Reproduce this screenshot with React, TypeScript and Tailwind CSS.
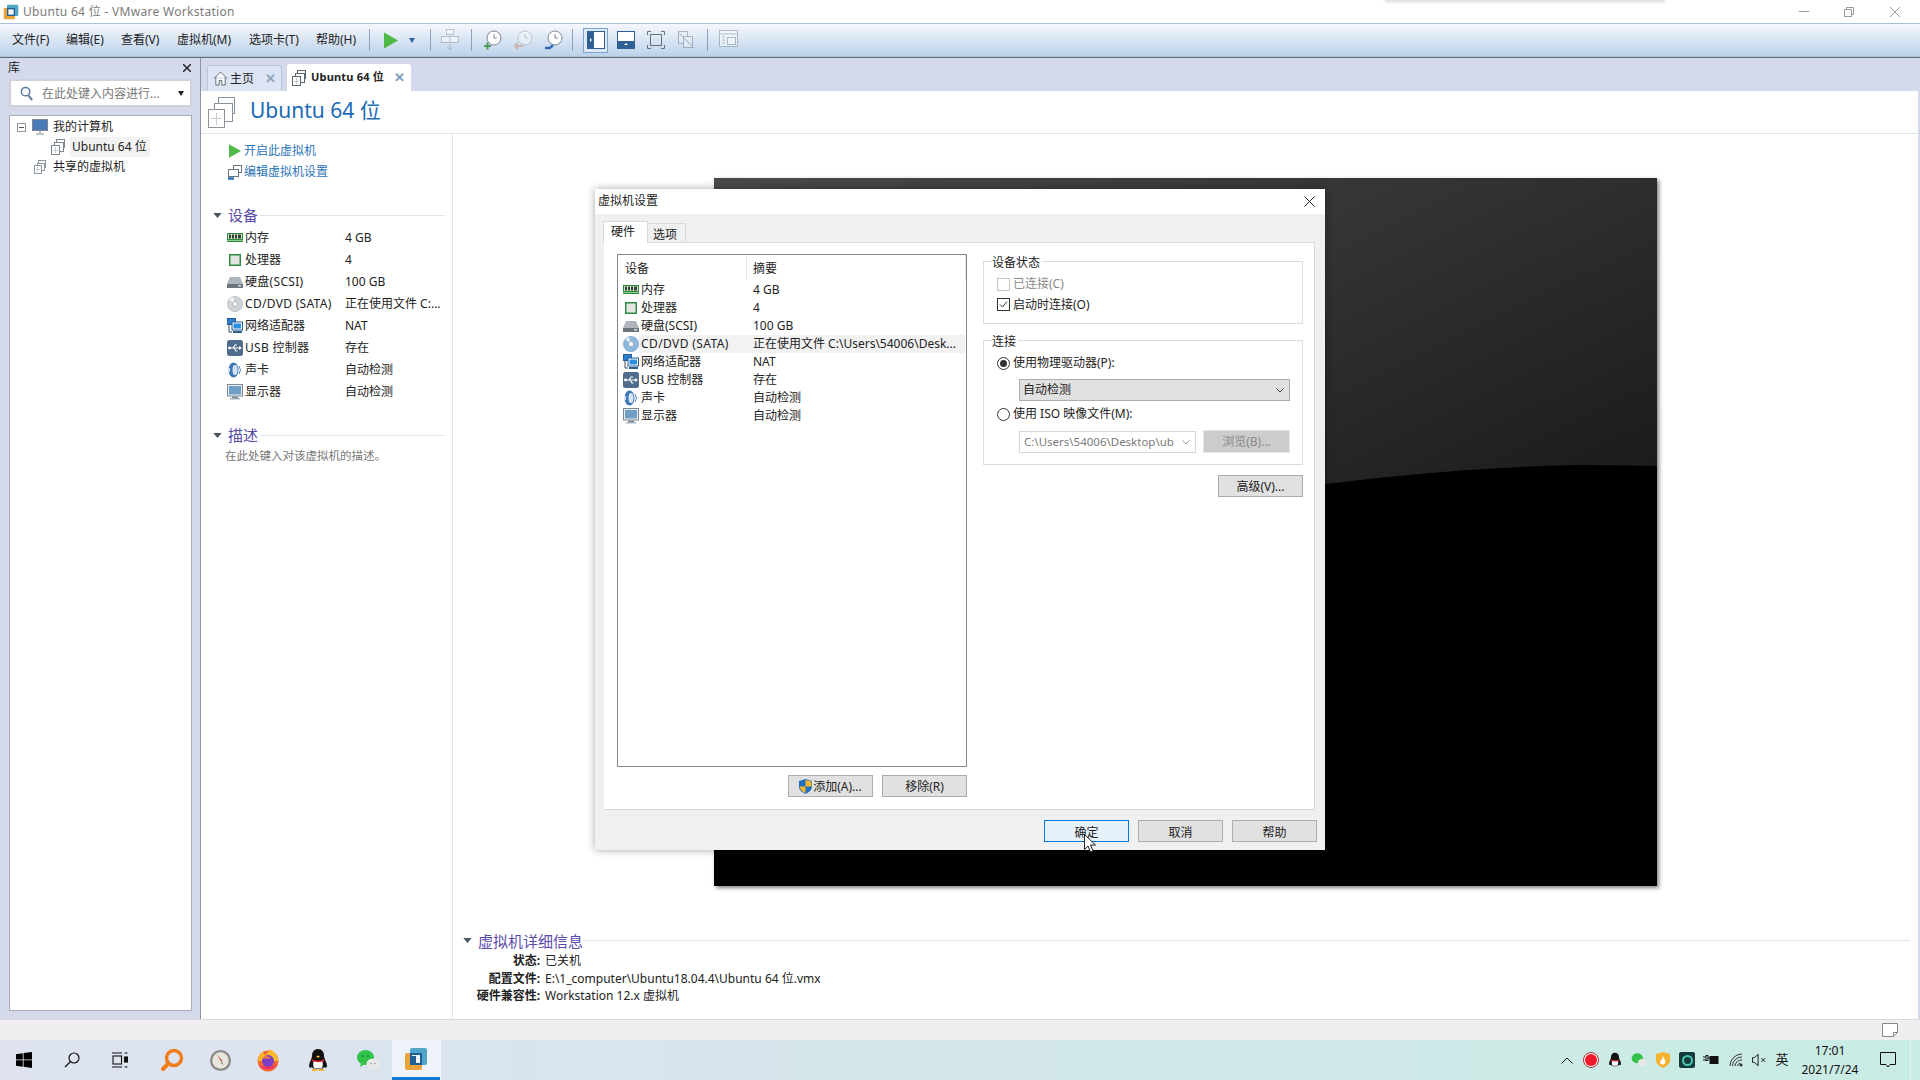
import React from 'react';

type IconProps = { className?: string };

const VmIcon = ({ className = 'w-4 h-4', color = '#7d8793', sw = 1 }: IconProps & { color?: string; sw?: number }) => (
  <svg viewBox="0 0 16 16" className={className} fill="#fff" stroke={color} strokeWidth={sw} shapeRendering="crispEdges">
    <rect x="5.5" y="0.5" width="8" height="8" />
    <rect x="3.5" y="3.5" width="9" height="9" />
    <rect x="0.5" y="6.5" width="8" height="9" />
    <path d="M4.5 8v6M2 11h5" stroke="#c5cbd3" />
  </svg>
);

const RamIcon = () => (
  <svg viewBox="0 0 16 16" className="w-4 h-4">
    <rect x="0" y="3" width="16" height="9" fill="#2e8b3e" />
    <rect x="1" y="4" width="14" height="5" fill="#cfe8c8" />
    <path d="M2 4.5h2v4H2zM5 4.5h2v4H5zM8 4.5h2v4H8zM11 4.5h3v4h-3z" fill="#3b3f3a" />
    <rect x="0" y="10" width="16" height="1" fill="#8ccb8e" />
  </svg>
);

const CpuIcon = () => (
  <svg viewBox="0 0 16 16" className="w-4 h-4">
    <rect x="2" y="2" width="12" height="12" fill="#2e8b45" />
    <rect x="3.500" y="3.500" width="9" height="9" fill="#e3e6e0" />
  </svg>
);

const HddIcon = () => (
  <svg viewBox="0 0 16 16" className="w-4 h-4">
    <path d="M3 3h10l3 7H0z" fill="#aeb5bd" />
    <path d="M0 10h16v4H0z" fill="#6c7480" />
    <rect x="11" y="11" width="3" height="1.5" fill="#d8dde2" />
  </svg>
);

const CdIcon = ({ tint = false }: { tint?: boolean }) => (
  <svg viewBox="0 0 16 16" className="w-4 h-4">
    <circle cx="8" cy="8" r="7.7" fill={tint ? '#8db8dd' : '#cfd2d6'} stroke={tint ? '#6f9dc6' : '#a8acb2'} strokeWidth="0.5" />
    <path d="M8 8 L2 3 A8 8 0 0 1 6 1z" fill="#fff" opacity="0.7" />
    <circle cx="8" cy="8" r="2.6" fill="#eef1f4" stroke="#9aa1a9" strokeWidth="0.6" />
    <circle cx="8" cy="8" r="1" fill="#fff" />
  </svg>
);

const NetIcon = () => (
  <svg viewBox="0 0 16 16" className="w-4 h-4">
    <rect x="0.5" y="0.5" width="8" height="6" fill="#2a7fd0" stroke="#245a92" />
    <path d="M2 7v7h3" fill="none" stroke="#3a4b5c" />
    <rect x="5" y="4" width="10.5" height="8" fill="#fff" stroke="#245a92" />
    <rect x="6.5" y="5.5" width="7.5" height="5" fill="#2a8fe0" />
    <rect x="6" y="13" width="9" height="2" fill="#2e5f8f" />
  </svg>
);

const UsbIcon = () => (
  <svg viewBox="0 0 16 16" className="w-4 h-4">
    <rect x="0" y="0" width="16" height="16" rx="2.5" fill="#4f6c8c" />
    <path d="M2 8h11M6 8l2-3h2M7 8l2 3h1.500" fill="none" stroke="#fff" strokeWidth="1.100" />
    <circle cx="2.500" cy="8" r="1.400" fill="#fff" />
    <path d="M12 6l3 2-3 2z" fill="#fff" />
  </svg>
);

const SoundIcon = () => (
  <svg viewBox="0 0 16 16" className="w-4 h-4">
    <ellipse cx="6.500" cy="8" rx="5" ry="7.500" fill="#3f78b8" />
    <ellipse cx="8" cy="8" rx="2.500" ry="5" fill="#d5e4f3" />
    <path d="M12 4q3 4 0 8" fill="none" stroke="#5a87b5" />
    <path d="M1 6h2v4H1z" fill="#cfe0f2" />
  </svg>
);

const MonitorIcon = () => (
  <svg viewBox="0 0 16 16" className="w-4 h-4">
    <rect x="0.500" y="0.500" width="15" height="11.500" fill="#eef1f4" stroke="#7b8794" />
    <rect x="2" y="2" width="12" height="8.500" fill="#6f9fc6" />
    <rect x="5" y="12.500" width="6" height="1.500" fill="#7b8794" />
    <rect x="3" y="14" width="10" height="1.500" fill="#a9b2bb" />
  </svg>
);

const Triangle = () => (
  <svg viewBox="0 0 10 6" className="w-[9px] h-[5px]">
    <path d="M0 0h10L5 6z" fill="#4a5560" />
  </svg>
);

const PlayIcon = ({ className }: IconProps) => (
  <svg viewBox="0 0 14 16" className={className}>
    <path d="M0 0l14 8-14 8z" fill="#4fb948" />
  </svg>
);

const ClockIcon = ({ badge, faded }: { badge?: string; faded?: boolean }) => (
  <svg viewBox="0 0 20 20" className="w-5 h-5" opacity={faded ? 0.35 : 1}>
    <circle cx="11" cy="8" r="7" fill="#fff" stroke="#7b8794" />
    <path d="M11 4v4h3" fill="none" stroke="#7b8794" />
    {badge === 'plus' && <path d="M1 16h7M4.500 12.500v7" stroke="#4f9a56" strokeWidth="2" />}
    {badge === 'back' && <path d="M0 16h9M4 13l-3 3 3 3" stroke="#c96b3a" strokeWidth="2" fill="none" />}
    {badge === 'wrench' && <path d="M1 18h5l3-3" stroke="#2f6fb0" strokeWidth="2.500" fill="none" />}
  </svg>
);

const toolbarIcon = 'w-[25px] h-[25px] flex items-center justify-center';

const Toolbar = () => (
  <div className="h-[34px] mx-0 border-y border-[#a9c1d6] bg-gradient-to-b from-[#f5f7fe] to-[#bdd3ea] flex items-center pl-[12px] text-[12px] text-[#222] shrink-0">
    {[
      ['文件(F)', 'w-[54px]'],
      ['编辑(E)', 'w-[55px]'],
      ['查看(V)', 'w-[56px]'],
      ['虚拟机(M)', 'w-[72px]'],
      ['选项卡(T)', 'w-[67px]'],
      ['帮助(H)', 'w-[53px]'],
    ].map(([label, width]) => (
      <span key={label} className={`${width} whitespace-nowrap`}>{label}</span>
    ))}
    <span className="w-px h-[22px] bg-[#8fa3b8] mr-[14px]" />
    <PlayIcon className="w-[14px] h-[17px] mr-[11px]" />
    <span className="w-0 h-0 border-x-[3px] border-x-transparent border-t-[5px] border-t-[#2b5fa5] mr-[15px]" />
    <span className="w-px h-[22px] bg-[#8fa3b8] mr-[9px]" />
    <div className="w-[20px] h-[22px] mr-[11px] opacity-50 flex items-center justify-center">
      <svg viewBox="0 0 18 22" className="w-[18px] h-[22px]" fill="#fff" stroke="#8b95a3">
        <rect x="5.500" y="0.500" width="7" height="5" />
        <rect x="0.500" y="7.500" width="17" height="6" />
        <path d="M9 15v6M6.500 18.500L9 21l2.500-2.500M9 7.500v6" fill="none" />
      </svg>
    </div>
    <span className="w-px h-[22px] bg-[#8fa3b8] mr-[8px]" />
    <div className={`${toolbarIcon} mr-[6px]`}><ClockIcon badge="plus" /></div>
    <div className={`${toolbarIcon} mr-[5px]`}><ClockIcon badge="back" faded /></div>
    <div className={`${toolbarIcon} mr-[6px]`}><ClockIcon badge="wrench" /></div>
    <span className="w-px h-[22px] bg-[#8fa3b8] mr-[10px]" />
    <div className={`${toolbarIcon} border border-[#7ea4cf] bg-[#dbe8f6] mr-[5px]`}>
      <svg viewBox="0 0 18 18" className="w-[18px] h-[18px]">
        <rect x="0.500" y="0.500" width="17" height="17" fill="#fff" stroke="#2f5f94" />
        <rect x="1" y="1" width="6" height="16" fill="#2f5f94" />
        <path d="M3 7l2 2-2 2z" fill="#fff" />
      </svg>
    </div>
    <div className={`${toolbarIcon} mr-[5px]`}>
      <svg viewBox="0 0 18 18" className="w-[18px] h-[18px]">
        <rect x="0.500" y="0.500" width="17" height="17" fill="#fff" stroke="#2f5f94" />
        <rect x="1" y="10" width="16" height="7" fill="#2f5f94" />
        <path d="M7 14l2-2 2 2z" fill="#fff" />
      </svg>
    </div>
    <div className={`${toolbarIcon} mr-[5px]`}>
      <svg viewBox="0 0 18 18" className="w-[18px] h-[18px]" fill="none" stroke="#68727e">
        <rect x="3.500" y="3.500" width="11" height="11" />
        <path d="M0.500 4V0.500H4M14 0.500h3.500V4M0.500 14v3.500H4M14 17.500h3.500V14" />
      </svg>
    </div>
    <div className={`${toolbarIcon} mr-[9px] opacity-45`}>
      <svg viewBox="0 0 18 18" className="w-[18px] h-[18px]" fill="#eef0f3" stroke="#68727e">
        <rect x="1.500" y="0.500" width="9" height="12" />
        <rect x="6.500" y="5.500" width="9" height="11" />
        <path d="M1 1l16 16" />
      </svg>
    </div>
    <span className="w-px h-[22px] bg-[#8fa3b8] mr-[11px]" />
    <div className="w-[22px] h-[20px] opacity-50">
      <svg viewBox="0 0 20 18" className="w-[20px] h-[18px]" fill="#fff" stroke="#7b8794">
        <rect x="0.500" y="0.500" width="18" height="16" />
        <path d="M1 4h17" />
        <rect x="8.500" y="7.500" width="8" height="7" />
        <path d="M3 7h3M3 10h3M3 13h3" />
      </svg>
    </div>
  </div>
);

const devices = [
  { icon: <RamIcon />, name: '内存', value: '4 GB' },
  { icon: <CpuIcon />, name: '处理器', value: '4' },
  { icon: <HddIcon />, name: '硬盘(SCSI)', value: '100 GB' },
  { icon: <CdIcon />, name: 'CD/DVD (SATA)', value: '正在使用文件 C:...' },
  { icon: <NetIcon />, name: '网络适配器', value: 'NAT' },
  { icon: <UsbIcon />, name: 'USB 控制器', value: '存在' },
  { icon: <SoundIcon />, name: '声卡', value: '自动检测' },
  { icon: <MonitorIcon />, name: '显示器', value: '自动检测' },
];

const SectionTitle = ({ title, lineClass }: { title: string; lineClass: string }) => (
  <div className="flex items-center h-[20px]">
    <Triangle />
    <span className="ml-[6px] text-[15px] text-[#5a4bab] whitespace-nowrap leading-[20px]">{title}</span>
    <span className={`h-px bg-[#dfe3ea] ml-[2px] ${lineClass}`} />
  </div>
);

const Sidebar = () => (
  <aside className="w-[200px] shrink-0 flex flex-col pl-[8px] pr-[8px] pb-[8px] text-[12px] text-[#222]">
    <div className="h-[21px] flex items-center justify-between pr-[1px] pb-[2px]">
      <span>库</span>
      <svg viewBox="0 0 8 8" className="w-2 h-2" stroke="#222" strokeWidth="1.400"><path d="M0 0l8 8M8 0L0 8" /></svg>
    </div>
    <div className="h-[28px] mt-0 ml-px bg-white border-2 border-[#cfd2dd] flex items-center pl-[8px] pr-[6px] text-[#777]">
      <svg viewBox="0 0 16 16" className="w-[15px] h-[15px] shrink-0" fill="none" stroke="#5f7f9f" strokeWidth="1.600">
        <circle cx="7" cy="6" r="4.500" />
        <path d="M10 10l4 5" strokeWidth="2.200" />
      </svg>
      <span className="ml-[8px] flex-1 whitespace-nowrap pt-px">在此处键入内容进行...</span>
      <span className="w-0 h-0 border-x-[3.500px] border-x-transparent border-t-[5px] border-t-[#222]" />
    </div>
    <div className="mt-[8px] flex-1 ml-px bg-white border border-[#a8acb8] pt-[1px] relative">
      <div className="h-[20px] flex items-center">
        <span className="ml-[7px] w-[9px] h-[9px] border border-[#8f97a3] flex items-center justify-center">
          <span className="w-[5px] h-px bg-[#555]" />
        </span>
        <svg viewBox="0 0 16 16" className="w-4 h-4 ml-[6px]">
          <rect x="0.500" y="0.500" width="15" height="11" fill="#4a7ab5" stroke="#7b8794" />
          <path d="M8 12v2M4 15h8" stroke="#7b8794" />
        </svg>
        <span className="ml-[5px]">我的计算机</span>
      </div>
      <div className="h-[20px] flex items-center pl-[41px]">
        <VmIcon className="w-4 h-4" />
        <span className="ml-[3px] bg-[#f2f2f2] h-[20px] leading-[20px] px-[2px] w-[80px] whitespace-nowrap">Ubuntu 64 位</span>
      </div>
      <div className="h-[20px] flex items-center pl-[24px]">
        <VmIcon className="w-[14px] h-[14px]" />
        <span className="ml-[5px]">共享的虚拟机</span>
      </div>
    </div>
  </aside>
);

const LeftInfo = () => (
  <div className="w-[252px] shrink-0 border-r border-[#dfe3ea] text-[12px] text-[#222] pl-[12px]">
    <div className="pl-[14px] pt-[6px] text-[#2b74b8]">
      <div className="h-[21px] flex items-center pl-[2px]">
        <PlayIcon className="w-[12px] h-[14px]" />
        <span className="ml-[3px]">开启此虚拟机</span>
      </div>
      <div className="h-[21px] flex items-center">
        <svg viewBox="0 0 16 16" className="w-4 h-4" fill="#fff" stroke="#6b7580">
          <rect x="6.500" y="1.500" width="8" height="7" />
          <rect x="1.500" y="5.500" width="10" height="7" />
          <path d="M1 14.500h6" stroke="#2f6fb0" strokeWidth="2.500" />
        </svg>
        <span className="ml-[1px]">编辑虚拟机设置</span>
      </div>
    </div>
    <div className="mt-[23px]">
      <SectionTitle title="设备" lineClass="w-[185px]" />
    </div>
    <div className="mt-[2px] pl-[14px]">
      {devices.map((d) => (
        <div key={d.name} className="h-[22px] flex items-center whitespace-nowrap">
          <span className="w-4 h-4 shrink-0">{d.icon}</span>
          <span className={`ml-[2px] w-[100px] ${/[A-Z]{3}/.test(d.name) ? 'tracking-[0.3px]' : ''}`}>{d.name}</span>
          <span>{d.value}</span>
        </div>
      ))}
    </div>
    <div className="mt-[22px]">
      <SectionTitle title="描述" lineClass="w-[185px]" />
    </div>
    <div className="mt-[2px] pl-[12px] text-[11.500px] text-[#777]">在此处键入对该虚拟机的描述。</div>
  </div>
);

const Preview = () => (
  <div className="ml-[261px] mt-[44px] w-[943px] h-[708px] shadow-[2px_2px_4px_rgba(0,0,0,0.5)] shrink-0">
    <svg viewBox="0 0 943 708" className="w-full h-full block">
      <defs>
        <linearGradient id="shine" gradientUnits="userSpaceOnUse" x1="0" y1="0" x2="289" y2="595">
          <stop offset="0" stopColor="#4a4a4a" />
          <stop offset="1" stopColor="#1c1c1c" />
        </linearGradient>
      </defs>
      <rect width="943" height="708" fill="url(#shine)" />
      <path d="M0 708V420Q300 340 611 306Q740 290 860 287Q900 287 943 288V708z" fill="#000" />
    </svg>
  </div>
);

const Details = () => (
  <div className="pl-[10px] pb-[14px] text-[12px] text-[#222]">
    <SectionTitle title="虚拟机详细信息" lineClass="flex-1 mr-[8px]" />
    <div className="mt-[2px]">
      {[
        ['状态:', '已关机'],
        ['配置文件:', 'E:\\1_computer\\Ubuntu18.04.4\\Ubuntu 64 位.vmx'],
        ['硬件兼容性:', 'Workstation 12.x 虚拟机'],
      ].map(([k, v]) => (
        <div key={k} className="h-[17.500px] flex items-center">
          <span className="w-[77px] text-right font-bold whitespace-nowrap">{k}</span>
          <span className="ml-[5px]">{v}</span>
        </div>
      ))}
    </div>
  </div>
);

const MainPanel = () => (
  <main className="flex-1 flex flex-col border-l border-[#8e93a3] mr-[2px] min-w-0">
    <div className="h-[33px] pl-[6px] pt-[7px] flex items-end text-[12px] text-[#222] shrink-0">
      <div className="w-[75px] h-[26px] border border-b-0 border-[#b9c6d8] rounded-t-[3px] bg-[#dde5f5] flex items-center pl-[5px]">
        <svg viewBox="0 0 16 16" className="w-[15px] h-[15px]" fill="#fff" stroke="#5d6670"><path d="M1 8l7-7 7 7M3 6.500V15h3.500v-5h3v5H13V6.500" /></svg>
        <span className="ml-[2px]">主页</span>
        <span className="ml-[11px] text-[#8fa5bf] text-[13px] font-bold">✕</span>
      </div>
      <div className="w-[124px] h-[27px] ml-[5px] rounded-t-[3px] bg-white flex items-center pl-[5px]">
        <VmIcon className="w-4 h-4" color="#5d6670" />
        <span className="ml-[3px] font-bold text-[11px] tracking-[0.2px] whitespace-nowrap">Ubuntu 64 位</span>
        <span className="ml-[10px] text-[#7d9cc0] text-[13px] font-bold">✕</span>
      </div>
    </div>
    <div className="flex-1 bg-white flex flex-col min-h-0">
      <div className="h-[43px] border-b border-[#dfe3ea] flex items-center pl-[6px] shrink-0">
        <VmIcon className="w-[33px] h-[33px]" color="#8a929c" sw={0.5} />
        <span className="ml-[10px] text-[21px] text-[#1a6ab5] whitespace-nowrap pb-[2px]">Ubuntu 64 位</span>
      </div>
      <div className="flex-1 flex min-h-0">
        <LeftInfo />
        <div className="flex-1 flex flex-col justify-between min-w-0">
          <Preview />
          <Details />
        </div>
      </div>
    </div>
  </main>
);

const btn = 'h-[22px] w-[85px] border border-[#adadad] bg-[#e1e1e1] flex items-center justify-center pt-px text-[12px] text-[#222]';

const Group = ({ title, className, children }: { title: string; className: string; children: React.ReactNode }) => (
  <div className={`relative border border-[#dcdcdc] ${className}`}>
    <span className="absolute left-[8px] -top-[6px] bg-white pr-[2px] leading-[14px]">{title}</span>
    {children}
  </div>
);

const Radio = ({ on }: { on?: boolean }) => (
  <span className="w-[13px] h-[13px] rounded-full border border-[#333] flex items-center justify-center shrink-0 bg-white">
    {on && <span className="w-[7px] h-[7px] rounded-full bg-[#333]" />}
  </span>
);

const dialogRows = [
  { icon: <RamIcon />, name: '内存', value: '4 GB' },
  { icon: <CpuIcon />, name: '处理器', value: '4' },
  { icon: <HddIcon />, name: '硬盘(SCSI)', value: '100 GB' },
  { icon: <CdIcon tint />, name: 'CD/DVD (SATA)', value: '正在使用文件 C:\\Users\\54006\\Desk...', active: true },
  { icon: <NetIcon />, name: '网络适配器', value: 'NAT' },
  { icon: <UsbIcon />, name: 'USB 控制器', value: '存在' },
  { icon: <SoundIcon />, name: '声卡', value: '自动检测' },
  { icon: <MonitorIcon />, name: '显示器', value: '自动检测' },
];

const SettingsDialog = () => (
  <div className="absolute left-[595px] top-[189px] w-[730px] h-[661px] bg-[#f0f0f0] shadow-[0_0_8px_rgba(0,0,0,0.35)] flex flex-col text-[12px] text-[#222]">
    <div className="h-[25px] bg-white flex items-center justify-between pl-[3px] pr-[10px] pb-[1px] shrink-0">
      <span>虚拟机设置</span>
      <svg viewBox="0 0 11 11" className="w-[11px] h-[11px]" stroke="#222"><path d="M0.500 0.500l10 10M10.500 0.500l-10 10" /></svg>
    </div>
    <div className="flex items-end h-[28px] pl-[8px] shrink-0">
      <div className="w-[45px] h-[22px] bg-white border border-b-0 border-[#d9d9d9] flex items-center pl-[7px] pb-px -mb-px relative">硬件</div>
      <div className="w-[38px] h-[19px] bg-[#f0f0f0] border border-b-0 border-l-0 border-[#d9d9d9] flex items-center justify-center pr-[3px] pt-[3px]">选项</div>
    </div>
    <div className="ml-[9px] mr-[10px] h-[568px] bg-white border-y border-r border-[#d9d9d9] flex shrink-0">
      <div className="pl-[13px] pt-[11px] w-[363px]">
        <div className="w-[350px] h-[513px] border border-[#82878c] bg-white">
          <div className="h-[25px] flex items-center relative">
            <span className="pl-[7px] pt-[3px] w-[129px] border-r border-[#e5e5e5] h-full flex items-center">设备</span>
            <span className="pl-[6px] pt-[3px] flex-1 h-full flex items-center border-r border-[#e5e5e5]">摘要</span>
          </div>
          <div className="pt-[1px]">
            {dialogRows.map((r) => (
              <div key={r.name} className="h-[18px] flex items-center whitespace-nowrap pl-[5px] pr-px">
                <span className="w-4 h-4 shrink-0">{r.icon}</span>
                <div className={`flex flex-1 h-full items-center ${r.active ? 'bg-[#f2f2f2]' : ''}`}>
                  <span className={`pl-[2px] w-[114px] shrink-0 ${r.active ? 'tracking-[0.4px]' : ''}`}>{r.name}</span>
                  <span>{r.value}</span>
                </div>
              </div>
            ))}
          </div>
        </div>
        <div className="mt-[8px] w-[350px] flex justify-end gap-[9px]">
          <div className={btn}>
            <svg viewBox="0 0 14 16" className="w-[13px] h-[15px] mr-[1px]">
              <path d="M7 0l7 2v6c0 4-3 6-7 8-4-2-7-4-7-8V2z" fill="#1f6fc4" />
              <path d="M7 1v7h6.500V2.500zM7 8v7c-3-1.500-6-3-6-7z" fill="#f4b92a" />
            </svg>
            添加(A)...
          </div>
          <div className={btn}>移除(R)</div>
        </div>
      </div>
      <div className="ml-[16px] pt-[18px] w-[320px]">
        <Group title="设备状态" className="h-[63px] pt-[12px] pl-[13px]">
          <div className="h-[20px] flex items-center text-[#8a8a8a]">
            <span className="w-[13px] h-[13px] border border-[#c4c4c4] mr-[3px]" />
            已连接(C)
          </div>
          <div className="h-[21px] flex items-center">
            <span className="w-[13px] h-[13px] border border-[#333] mr-[3px] flex items-center justify-center">
              <svg viewBox="0 0 11 11" className="w-[11px] h-[11px]" fill="none" stroke="#333"><path d="M2 5.500l2.500 2.500L9 2.500" /></svg>
            </span>
            启动时连接(O)
          </div>
        </Group>
        <Group title="连接" className="mt-[16px] h-[125px] pt-[12px] pl-[13px]">
          <div className="h-[20px] flex items-center gap-[3px]">
            <Radio on />
            使用物理驱动器(P):
          </div>
          <div className="mt-[6px] ml-[22px] w-[271px] h-[22px] bg-[#e1e1e1] border border-[#adadad] flex items-center justify-between pl-[3px] pr-[5px]">
            自动检测
            <svg viewBox="0 0 8 5" className="w-2 h-[5px]" fill="none" stroke="#444"><path d="M0.500 0.500L4 4l3.500-3.500" /></svg>
          </div>
          <div className="mt-[3px] h-[20px] flex items-center gap-[3px]">
            <Radio />
            使用 ISO 映像文件(M):
          </div>
          <div className="mt-[7px] ml-[22px] flex gap-[7px]">
            <div className="w-[177px] h-[22px] border border-[#d9d9d9] flex items-center justify-between pl-[4px] pr-[5px] text-[#7a7a7a] text-[11.500px] whitespace-nowrap">
              <span>C:\Users\54006\Desktop\ub</span>
              <svg viewBox="0 0 8 5" className="w-2 h-[5px] shrink-0" fill="none" stroke="#999"><path d="M0.500 0.500L4 4l3.500-3.500" /></svg>
            </div>
            <div className="w-[87px] h-[23px] -mt-px bg-[#cccccc] border border-[#e6e6e6] flex items-center justify-center text-[#8a8a8a]">浏览(B)...</div>
          </div>
        </Group>
        <div className="mt-[10px] flex justify-end">
          <div className={btn}>高级(V)...</div>
        </div>
      </div>
    </div>
    <div className="mt-[10px] flex justify-end gap-[9px] pr-[8px]">
      <div className={`${btn} !pt-[3px] !border-[#0078d7] !bg-[#e5f1fb]`}>确定</div>
      <div className={`${btn} !pt-[3px]`}>取消</div>
      <div className={`${btn} !pt-[3px]`}>帮助</div>
    </div>
  </div>
);

const Cursor = () => (
  <svg viewBox="0 0 12 19" className="absolute left-[1084px] top-[834px] w-[12px] h-[19px]">
    <path d="M0.500 0.500v15l3.500-3.500 2.500 6 2.500-1-2.500-6h5z" fill="#fff" stroke="#222" />
  </svg>
);

const trayCell = 'w-[24px] flex items-center justify-center shrink-0';

const Taskbar = () => (
  <div className="h-[40px] bg-gradient-to-r from-[#dfe3f1] via-[#d3e6ea] to-[#c8ece4] flex items-center shrink-0 text-[#111]">
    <div className="w-12 flex justify-center">
      <svg viewBox="0 0 16 16" className="w-4 h-4" fill="#000">
        <path d="M0 2.200l6.800-1V7.500H0zM7.600 1l8.400-1v7.500H7.600zM0 8.300h6.800v6.500L0 13.800zM7.600 8.300H16V16l-8.400-1.200z" />
      </svg>
    </div>
    <div className="w-12 flex justify-center">
      <svg viewBox="0 0 16 16" className="w-4 h-4" fill="none" stroke="#111" strokeWidth="1.200">
        <circle cx="10" cy="6" r="5" />
        <path d="M6.500 9.500L1 15" />
      </svg>
    </div>
    <div className="w-12 flex justify-center">
      <svg viewBox="0 0 16 16" className="w-4 h-4" fill="none" stroke="#111" strokeWidth="1.100">
        <path d="M0 1h10M0 15h10" />
        <rect x="1" y="4" width="8.500" height="8" />
        <path d="M12.500 1h3M12.500 15h3" />
        <rect x="12.500" y="5" width="3" height="5" fill="#111" />
      </svg>
    </div>
    <div className="ml-[4px] w-12 flex justify-center">
      <svg viewBox="0 0 24 24" className="w-6 h-6" fill="none">
        <circle cx="14" cy="10" r="7.500" stroke="#ef7d1a" strokeWidth="3.500" />
        <path d="M8.500 15.500L3 21" stroke="#ef7d1a" strokeWidth="4" strokeLinecap="round" />
      </svg>
    </div>
    <div className="w-12 flex justify-center">
      <svg viewBox="0 0 24 24" className="w-[23px] h-[23px]">
        <circle cx="12" cy="12" r="11" fill="#8b8b86" />
        <circle cx="12" cy="12" r="8.500" fill="#e9e6de" />
        <path d="M8 6l5 7 1-1z" fill="#c73a2c" />
        <path d="M13 13l3 4-4-3z" fill="#777" />
      </svg>
    </div>
    <div className="w-12 flex justify-center">
      <svg viewBox="0 0 24 24" className="w-6 h-6">
        <circle cx="12" cy="13" r="10.500" fill="#f6692e" />
        <path d="M2 13C2 7 6 4 8 4c-1 2 0 3 1 3 2-2 4-3 5-6 5 3 8 7 8.500 12z" fill="#fbb829" />
        <circle cx="12" cy="13" r="6" fill="#7a3fc4" />
        <path d="M6 10c3-3 8-2 9 1-3-1-6 0-9-1z" fill="#f9803b" />
        <path d="M3 17c3 5 14 7 18-1-4 3-12 4-18 1z" fill="#ec2f6a" />
      </svg>
    </div>
    <div className="ml-[2px] w-12 flex justify-center">
      <svg viewBox="0 0 24 24" className="w-6 h-6">
        <path d="M12 1c-4 0-6 3-6 7 0 3-3 6-3 10 0 2 2 2 3 1 1 3 11 3 12 0 1 1 3 1 3-1 0-4-3-7-3-10 0-4-2-7-6-7z" fill="#111" />
        <path d="M7.500 13c-.5 3-.5 6 1 7.500h7c1.500-1.500 1.500-4.500 1-7.500z" fill="#fff" />
        <path d="M6 11c3 2 9 2 12 0l.5 2c-3 1.500-9 1.500-13 0z" fill="#d6242c" />
        <path d="M10 8.500l2-1 2 1-2 1.500z" fill="#f5b52b" />
        <path d="M6 21h5v2H6zM13 21h5v2h-5z" fill="#f5b52b" />
      </svg>
    </div>
    <div className="ml-[2px] w-12 flex justify-center">
      <svg viewBox="0 0 24 24" className="w-6 h-6">
        <ellipse cx="9.500" cy="9.500" rx="8.500" ry="7.500" fill="#34c34a" />
        <path d="M5 15l-1 4 4-2.500z" fill="#34c34a" />
        <circle cx="6.500" cy="8" r="1" fill="#15803d" />
        <circle cx="12" cy="8" r="1" fill="#15803d" />
        <ellipse cx="17" cy="16" rx="6.500" ry="5.500" fill="#e8e8e8" />
        <circle cx="15" cy="15.500" r="0.800" fill="#999" />
        <circle cx="19" cy="15.500" r="0.800" fill="#999" />
      </svg>
    </div>
    <div className="w-12 h-[40px] bg-[#eff3fb] border-b-[3px] border-[#0f78d4] flex items-center justify-center">
      <svg viewBox="0 0 24 24" className="w-[24px] h-[24px]">
        <rect x="6" y="1" width="17" height="17" rx="2" fill="#4fa6c8" />
        <rect x="1" y="6" width="17" height="17" rx="2" fill="#e8a33a" />
        <rect x="7" y="7" width="10" height="10" fill="#f2f6fb" stroke="#1f5f96" strokeWidth="2" />
        <rect x="7" y="9" width="5" height="7" fill="#1f5f96" />
      </svg>
    </div>
    <span className="w-px h-[40px] bg-[#f1f5fa]" />
    <div className="flex-1" />
    <div className={trayCell}>
      <svg viewBox="0 0 12 7" className="w-3 h-[7px]" fill="none" stroke="#111"><path d="M0.500 6.500L6 1l5.500 5.500" /></svg>
    </div>
    <div className={trayCell}>
      <span className="w-4 h-4 rounded-full bg-white border border-[#a33] flex items-center justify-center">
        <span className="w-3 h-3 rounded-full bg-[#f0182a]" />
      </span>
    </div>
    <div className={trayCell}>
      <svg viewBox="0 0 24 24" className="w-4 h-4">
        <path d="M12 1c-4 0-6 3-6 7 0 3-3 6-3 10 0 2 2 2 3 1 1 3 11 3 12 0 1 1 3 1 3-1 0-4-3-7-3-10 0-4-2-7-6-7z" fill="#111" />
        <path d="M7.500 13c-.5 3-.5 6 1 7.500h7c1.500-1.500 1.500-4.500 1-7.500z" fill="#fff" />
        <path d="M6 11c3 2 9 2 12 0l.5 2c-3 1.500-9 1.500-13 0z" fill="#d6242c" />
      </svg>
    </div>
    <div className={trayCell}>
      <svg viewBox="0 0 24 24" className="w-4 h-4">
        <ellipse cx="9.500" cy="9.500" rx="8.500" ry="7.500" fill="#34c34a" />
        <ellipse cx="17" cy="16" rx="6.500" ry="5.500" fill="#e8e8e8" />
      </svg>
    </div>
    <div className={trayCell}>
      <svg viewBox="0 0 16 16" className="w-4 h-4">
        <path d="M8 0l7 2v6c0 4-3 6-7 8-4-2-7-4-7-8V2z" fill="#f6b12f" />
        <path d="M8 4c1 3 3 4 2 7-1 2-4 2-5 0 0-2 2-3 3-7z" fill="#fff" />
      </svg>
    </div>
    <div className={trayCell}>
      <span className="w-4 h-4 rounded-[2px] bg-[#143a3a] flex items-center justify-center">
        <span className="w-[11px] h-[11px] rounded-full border-2 border-[#47c9b5]" />
      </span>
    </div>
    <div className={trayCell}>
      <svg viewBox="0 0 16 10" className="w-4 h-[10px]" fill="none" stroke="#111">
        <path d="M0 2h3M0 5h3M3 0.500h2v5H3zM5 3h2" />
        <rect x="7" y="1.500" width="8" height="7" fill="#111" />
      </svg>
    </div>
    <div className="w-[26px] flex justify-center shrink-0">
      <svg viewBox="0 0 14 14" className="w-[14px] h-[14px]" fill="none" stroke="#333">
        <path d="M1 13A12 12 0 0 1 13 1M3.500 13A9 9 0 0 1 13 4M6 13a6.500 6.500 0 0 1 7-6M8.500 13a4 4 0 0 1 3-3" />
        <circle cx="12" cy="12" r="1.500" fill="#333" stroke="none" />
      </svg>
    </div>
    <div className="w-[20px] flex justify-center shrink-0">
      <svg viewBox="0 0 16 14" className="w-[15px] h-[14px]" fill="none" stroke="#111">
        <path d="M0.500 4.500h2L6.500 1v12l-4-3.500h-2z" />
        <path d="M10 5l4 4M14 5l-4 4" />
      </svg>
    </div>
    <div className="w-[26px] text-center text-[13px] shrink-0">英</div>
    <div className="w-[68px] ml-[1px] text-center text-[12px] leading-[19px] shrink-0">
      <div>17:01</div>
      <div>2021/7/24</div>
    </div>
    <div className="w-[46px] flex justify-center shrink-0 pl-[1px]">
      <svg viewBox="0 0 16 16" className="w-4 h-4" fill="none" stroke="#111"><path d="M0.500 0.500h15v12H10l-2 2.500-2-2.500H0.500z" /></svg>
    </div>
    <div className="w-[10px] h-[40px] border-l border-[#e4f5f1]" />
  </div>
);

const App: React.FC = () => {
  return (
    <div className="w-[1920px] h-[1080px] relative flex flex-col overflow-hidden bg-white font-['Noto_Sans','Noto_Sans_CJK_SC',sans-serif]">
      {/* Title bar */}
      <div className="h-[23px] flex items-center pl-[3px] shrink-0 bg-white relative">
        <svg viewBox="0 0 24 24" className="w-4 h-4">
          <rect x="6" y="1" width="17" height="17" rx="2" fill="#4fa6c8" />
          <rect x="1" y="6" width="17" height="17" rx="2" fill="#e8a33a" />
          <rect x="7" y="7" width="10" height="10" fill="#f2f6fb" stroke="#1f5f96" strokeWidth="2" />
        </svg>
        <span className="ml-[4px] text-[12px] text-[#7a7a7a] tracking-[0.3px] whitespace-nowrap">Ubuntu 64 位 - VMware Workstation</span>
        <div className="flex-1" />
        <div className="w-[10px] h-px bg-[#999] mr-[35px]" />
        <svg viewBox="0 0 10 10" className="w-[10px] h-[10px] mr-[36px]" fill="none" stroke="#999"><path d="M2.500 2.500V0.500h7v7h-2M0.500 2.500h7v7h-7z" /></svg>
        <svg viewBox="0 0 10 10" className="w-[10px] h-[10px] mr-[20px]" stroke="#999"><path d="M0 0l10 10M10 0L0 10" /></svg>
        <div className="absolute left-[1385px] top-0 w-[280px] h-px bg-[#e2e2e2] shadow-[0_1px_3px_rgba(0,0,0,0.3)]" />
      </div>
      <Toolbar />
      <div className="flex-1 flex bg-[#d5d9ec] border-t border-[#666c7a] min-h-0">
        <Sidebar />
        <MainPanel />
      </div>
      {/* Status bar */}
      <div className="h-[21px] bg-[#f0eef0] border-t border-[#d9d9d9] flex items-center justify-end pr-[22px] shrink-0">
        <svg viewBox="0 0 16 14" className="w-4 h-[14px]" fill="#fff" stroke="#888"><path d="M0.500 0.500h15v9l-4 4h-11z" /><path d="M11.500 13.500v-4h4" fill="none" /></svg>
      </div>
      <Taskbar />
      <SettingsDialog />
      <Cursor />
    </div>
  );
};

export default App;
